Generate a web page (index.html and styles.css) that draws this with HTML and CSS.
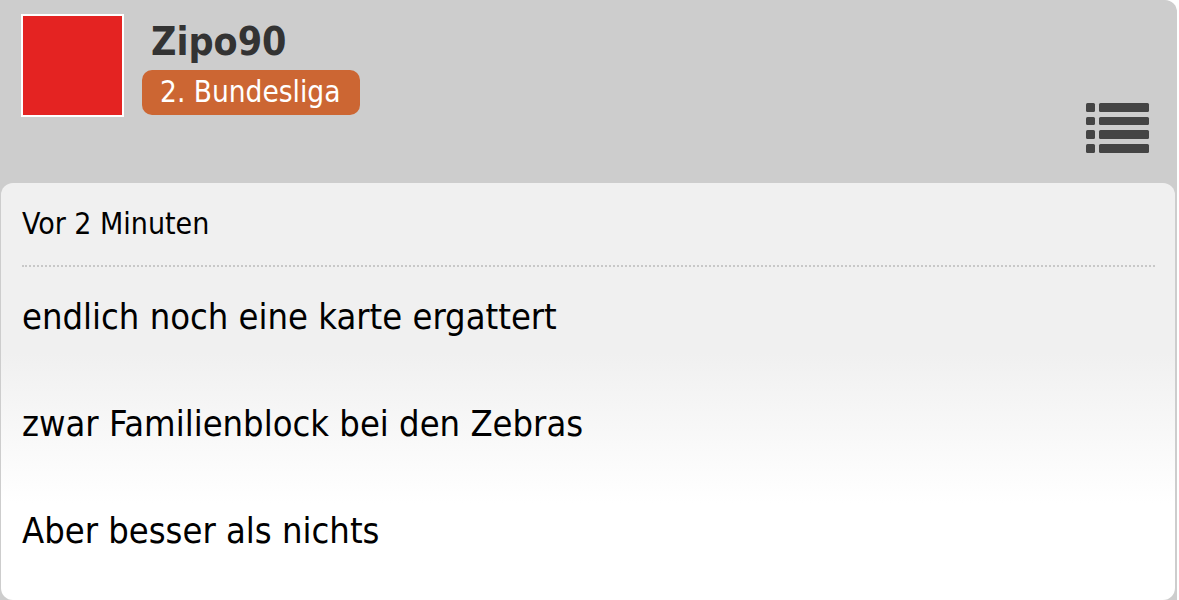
FILE: index.html
```html
<!DOCTYPE html>
<html lang="de">
  <head>
    <meta charset="UTF-8" />
    <meta name="viewport" content="width=device-width, initial-scale=1.0" />
    <title>Zipo90</title>
    <link rel="stylesheet" href="styles.css">
  </head>
  <body>
    <section class="beitrag">
      <header class="kopf">
        <div class="wappen"></div>
        <div class="info">
          <h1 class="name">Zipo90</h1>
          <span class="liga">2. Bundesliga</span>
        </div>
        <button class="menu" aria-label="Menü">
          <svg width="64" height="51" viewBox="0 0 64 51">
            <g fill="#444">
              <rect x="0" y="0" width="9" height="9" rx="1.5" />
              <rect x="13" y="0" width="50" height="9" rx="1.5" />
              <rect x="0" y="14" width="9" height="8" rx="1.5" />
              <rect x="13" y="14" width="50" height="8" rx="1.5" />
              <rect x="0" y="27" width="9" height="9" rx="1.5" />
              <rect x="13" y="27" width="50" height="9" rx="1.5" />
              <rect x="0" y="41" width="9" height="9" rx="1.5" />
              <rect x="13" y="41" width="50" height="9" rx="1.5" />
            </g>
          </svg>
        </button>
      </header>

      <article class="karte">
        <p class="zeit">Vor 2 Minuten</p>
        <p class="text">endlich noch eine karte ergattert</p>
        <p class="text">zwar Familienblock bei den Zebras</p>
        <p class="text">Aber besser als nichts</p>
      </article>
    </section>
  </body>
</html>
```

FILE: styles.css
```css
body {
  margin: 0;
  background: #fff;
  font-family: "DejaVu Sans Condensed", "DejaVu Sans", sans-serif;
  font-stretch: condensed;
}

.beitrag {
  width: 1177px;
  height: 600px;
  background: #cdcdcd;
  border-radius: 0 12px 0 0;
  display: flex;
  flex-direction: column;
  overflow: hidden;
}

.kopf {
  display: flex;
  align-items: flex-start;
  height: 183px;
  padding: 14px 27px 0 21px;
  box-sizing: border-box;
}

.wappen {
  width: 99px;
  height: 99px;
  background: #e42322;
  border: 2px solid #fff;
}

.info {
  flex: 1;
  margin-left: 18px;
}

.name {
  margin: 4px 0 0 9px;
  font-size: 39px;
  line-height: 48px;
  font-weight: bold;
  color: #333;
}

.liga {
  display: inline-block;
  margin-top: 4px;
  padding: 0 20px 0 18px;
  height: 45px;
  line-height: 45px;
  font-size: 29.5px;
  color: #fff;
  background: #cc6633;
  border-radius: 10px;
}

.menu {
  margin-top: 89px;
  padding: 0;
  border: 0;
  background: none;
}

.menu svg {
  display: block;
}

.karte {
  flex: 1;
  margin: 0 2px 0 1px;
  padding: 0 20px 0 21px;
  border-radius: 12px;
  background: linear-gradient(#f0f0f0 0, #f0f0f0 170px, #fff 320px);
}

.zeit {
  margin: 0;
  padding: 23px 0 23px;
  font-size: 30px;
  line-height: 36px;
  color: #000;
  border-bottom: 2px dotted #c8c8c8;
}

.text {
  margin: 0;
  height: 107px;
  line-height: 100px;
  font-size: 36px;
  color: #000;
}
```
